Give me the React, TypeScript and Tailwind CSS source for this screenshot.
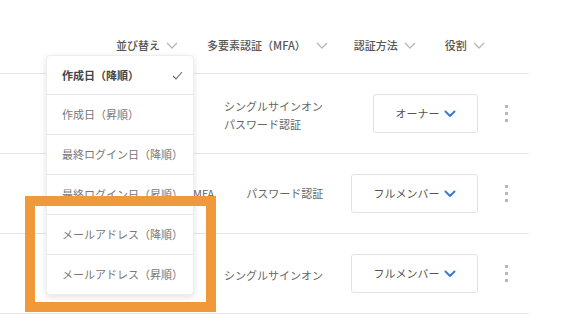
import React from "react";

const font = { fontFamily: '"Noto Sans CJK JP", "Noto Sans", sans-serif' };

const sortOptions = [
  "作成日（降順）",
  "作成日（昇順）",
  "最終ログイン日（降順）",
  "最終ログイン日（昇順）",
  "メールアドレス（降順）",
  "メールアドレス（昇順）",
];

function Chevron({ className }: { className?: string }) {
  return (
    <svg width="12" height="7" viewBox="0 0 12 7" fill="none" className={className}>
      <polyline points="1,1 6,6 11,1" stroke="currentColor" strokeWidth="1.2" strokeLinejoin="round" />
    </svg>
  );
}

function HeaderItem({ label, gap = "gap-[6px]" }: { label: string; gap?: string }) {
  return (
    <div className={`flex items-center ${gap}`}>
      <span className="text-[11px] font-medium text-[#555] leading-4">{label}</span>
      <Chevron className="text-[#b5b5b5]" />
    </div>
  );
}

function RoleButton({ label, width }: { label: string; width: string }) {
  return (
    <div className={`${width} h-[39px] ml-auto border border-[#e2e2e2] rounded-[3px] flex items-center justify-center gap-[4px]`}>
      <span className="text-[11px] text-[#555]">{label}</span>
      <svg width="12" height="8" viewBox="0 0 12 8" fill="none">
        <polyline points="1.5,1.5 6,6 10.5,1.5" stroke="#3a7bd5" strokeWidth="2" strokeLinecap="round" strokeLinejoin="round" />
      </svg>
    </div>
  );
}

function Kebab() {
  return (
    <div className="ml-[26px] w-[4px] flex flex-col items-center gap-[4px]">
      <span className="w-[3px] h-[3px] bg-[#b8b8b8]" />
      <span className="w-[3px] h-[3px] bg-[#b8b8b8]" />
      <span className="w-[3px] h-[3px] bg-[#b8b8b8]" />
    </div>
  );
}

export default function App() {
  return (
    <div className="relative w-[563px] h-[329px] bg-white overflow-hidden" style={font}>
      <div className="w-[529px]">
        {/* Header */}
        <div className="h-[74px] border-b border-[#e6e6e6] flex items-start pt-[37px] pl-[116px]">
          <HeaderItem label="並び替え" />
          <div className="ml-[29px]">
            <HeaderItem label="多要素認証（MFA）" gap="gap-[10px]" />
          </div>
          <div className="ml-[26px]">
            <HeaderItem label="認証方法" />
          </div>
          <div className="ml-[29px]">
            <HeaderItem label="役割" />
          </div>
        </div>

        {/* Row 1 */}
        <div className="h-[80px] border-b border-[#e6e6e6] flex items-center pl-[224px] pr-[21px]">
          <div className="text-[11px] text-[#666] leading-[18px] pt-[3px]">
            <div>シングルサインオン</div>
            <div>パスワード認証</div>
          </div>
          <RoleButton label="オーナー" width="w-[105px]" />
          <Kebab />
        </div>

        {/* Row 2 */}
        <div className="h-[80px] border-b border-[#e6e6e6] flex items-center pl-[193px] pr-[21px]">
          <span className="text-[11px] text-[#666]">MFA</span>
          <span className="ml-[32px] text-[11px] text-[#666]">パスワード認証</span>
          <RoleButton label="フルメンバー" width="w-[127px]" />
          <Kebab />
        </div>

        {/* Row 3 */}
        <div className="h-[80px] border-b border-[#e6e6e6] flex items-center pl-[224px] pr-[21px]">
          <span className="text-[11px] text-[#666] pt-[3px]">シングルサインオン</span>
          <RoleButton label="フルメンバー" width="w-[127px]" />
          <Kebab />
        </div>
      </div>

      {/* Sort dropdown */}
      <div className="absolute left-[46px] top-[55px] w-[148px] bg-white rounded-[4px] border border-[#eeeeee] shadow-[0_2px_6px_rgba(0,0,0,0.12)]">
        {sortOptions.map((opt, i) => (
          <div
            key={opt}
            className={`flex items-center justify-between pl-[15px] pr-[10px] ${i === 0 ? "h-[38px]" : "h-[40px] border-t border-[#e6e6e6]"}`}
          >
            <span className={`text-[11px] ${i === 0 ? "font-bold text-[#444]" : "text-[#777]"}`}>{opt}</span>
            {i === 0 && (
              <svg width="11" height="9" viewBox="0 0 11 9" fill="none">
                <polyline points="1,5 4,8 10,1" stroke="#666" strokeWidth="1.1" />
              </svg>
            )}
          </div>
        ))}
      </div>

      {/* Highlight frame */}
      <div className="absolute left-[25px] top-[196px] w-[191px] h-[116px] border-[10px] border-[#f0993a]" />
    </div>
  );
}
